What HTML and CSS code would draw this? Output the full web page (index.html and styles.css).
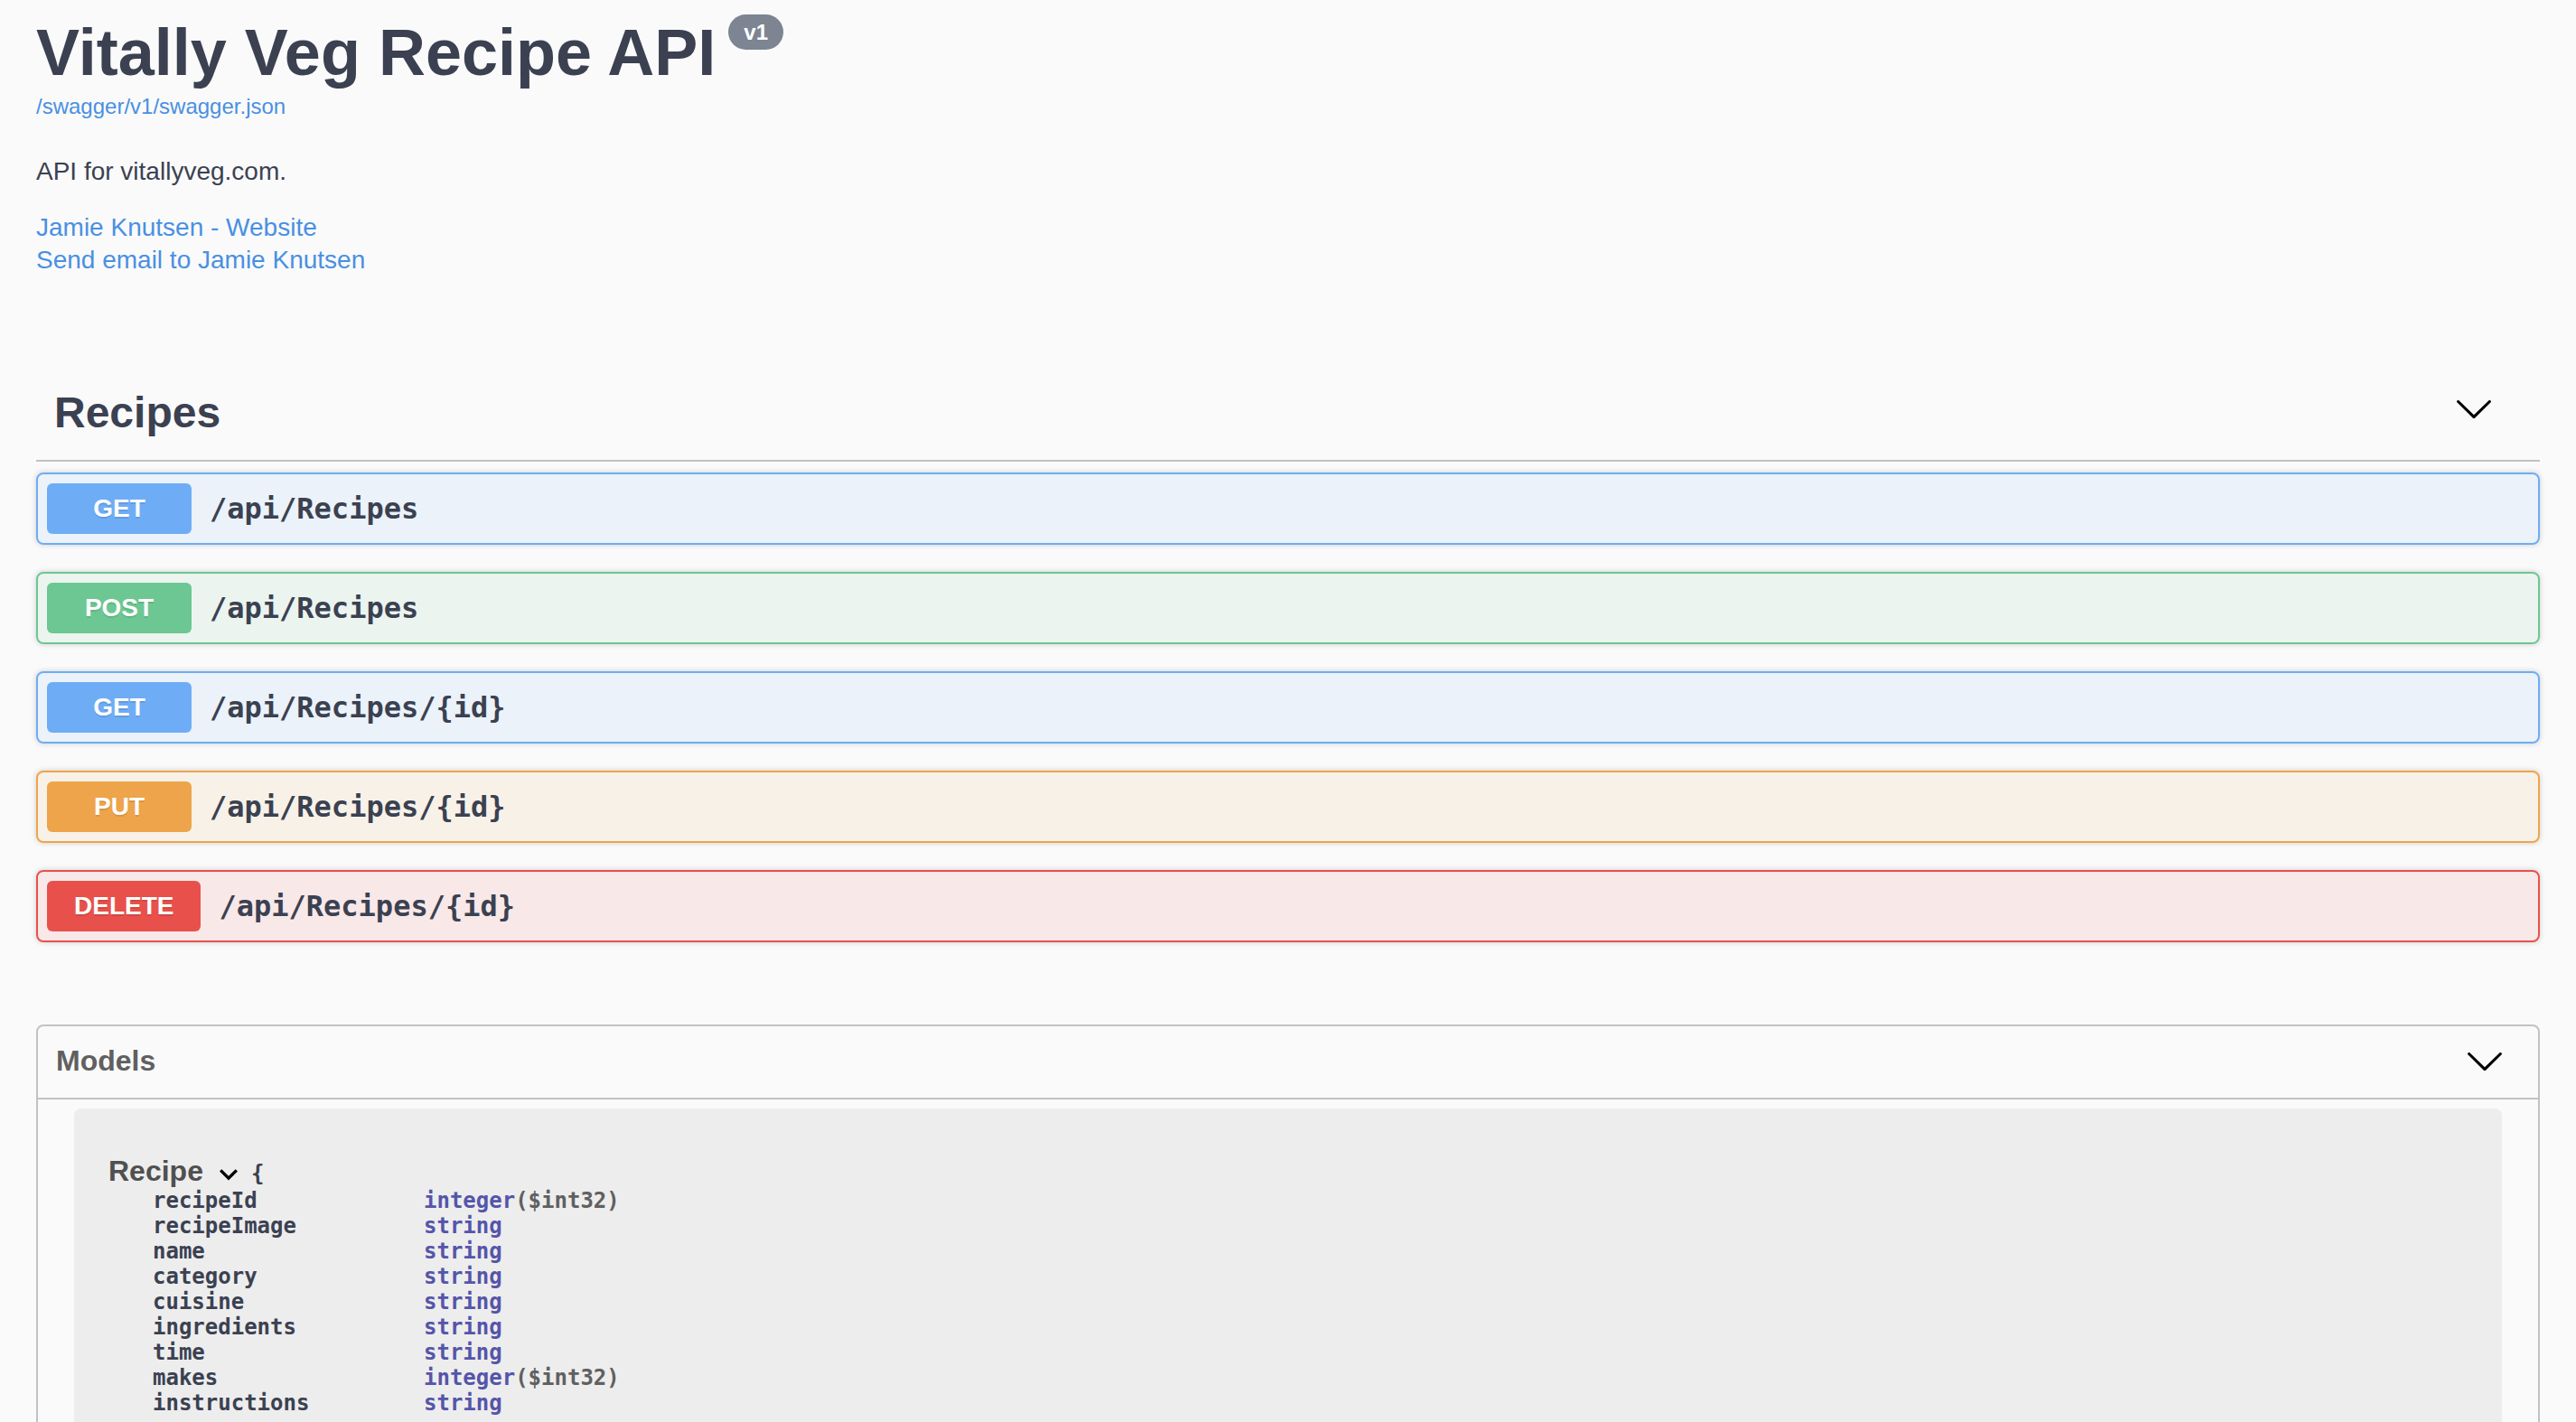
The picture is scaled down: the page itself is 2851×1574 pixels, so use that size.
FILE: index.html
```html
<!DOCTYPE html>
<html lang="en">
<head>
<meta charset="utf-8">
<title>Swagger UI</title>
<link rel="stylesheet" href="styles.css">
</head>
<body>
<div class="wrapper">
  <section class="info">
    <h2 class="title">Vitally Veg Recipe API<span class="version">v1</span></h2>
    <div class="base-url"><a href="#">/swagger/v1/swagger.json</a></div>
    <p class="description">API for vitallyveg.com.</p>
    <div class="contact">
      <a href="#">Jamie Knutsen - Website</a>
      <a href="#">Send email to Jamie Knutsen</a>
    </div>
  </section>

  <section class="tag-section">
    <h3 class="opblock-tag">
      <span class="tag-name">Recipes</span>
      <button class="expand tag-expand" type="button" aria-label="Collapse">
        <svg class="arrow" width="44" height="44" viewBox="0 0 20 20"><path d="M17.418 6.109c.272-.268.709-.268.979 0s.271.701 0 .969l-7.908 7.83c-.27.268-.707.268-.979 0l-7.908-7.83c-.27-.268-.27-.701 0-.969.271-.268.709-.268.979 0L10 13.25l7.418-7.141z"/></svg>
      </button>
    </h3>

    <div class="opblock get">
      <span class="method">GET</span>
      <span class="path">/api/Recipes</span>
    </div>
    <div class="opblock post">
      <span class="method">POST</span>
      <span class="path">/api/Recipes</span>
    </div>
    <div class="opblock get">
      <span class="method">GET</span>
      <span class="path">/api/Recipes/{id}</span>
    </div>
    <div class="opblock put">
      <span class="method">PUT</span>
      <span class="path">/api/Recipes/{id}</span>
    </div>
    <div class="opblock delete">
      <span class="method">DELETE</span>
      <span class="path">/api/Recipes/{id}</span>
    </div>
  </section>

  <section class="models">
    <h4 class="models-head">
      <span>Models</span>
      <svg class="arrow models-arrow" width="44" height="44" viewBox="0 0 20 20"><path d="M17.418 6.109c.272-.268.709-.268.979 0s.271.701 0 .969l-7.908 7.83c-.27.268-.707.268-.979 0l-7.908-7.83c-.27-.268-.27-.701 0-.969.271-.268.709-.268.979 0L10 13.25l7.418-7.141z"/></svg>
    </h4>
    <div class="model-container">
      <div class="model-title-line"><span class="model-title">Recipe</span><svg class="model-toggle" width="20" height="12.5" viewBox="6 8.5 12 7.5"><path d="M16.59 8.59L12 13.17 7.41 8.59 6 10l6 6 6-6z"/></svg><span class="brace">{</span></div>
      <div class="props">
        <span class="prop-name">recipeId</span><span class="prop-type">integer<span class="prop-format">($int32)</span></span>
        <span class="prop-name">recipeImage</span><span class="prop-type">string</span>
        <span class="prop-name">name</span><span class="prop-type">string</span>
        <span class="prop-name">category</span><span class="prop-type">string</span>
        <span class="prop-name">cuisine</span><span class="prop-type">string</span>
        <span class="prop-name">ingredients</span><span class="prop-type">string</span>
        <span class="prop-name">time</span><span class="prop-type">string</span>
        <span class="prop-name">makes</span><span class="prop-type">integer<span class="prop-format">($int32)</span></span>
        <span class="prop-name">instructions</span><span class="prop-type">string</span>
      </div>
    </div>
  </section>
</div>
</body>
</html>
```

FILE: styles.css
```css
html {
  overflow: hidden;
}

body {
  margin: 0;
  background: #fafafa;
  font-family: "Liberation Sans", Arial, sans-serif;
  color: #3b4151;
}

.wrapper {
  padding: 0 40px 80px;
}

a {
  color: #4990e2;
  text-decoration: none;
}

/* ---------- info ---------- */
.title {
  margin: 18px 0 0;
  font-size: 72px;
  line-height: 80px;
  font-weight: bold;
  color: #3b4151;
  white-space: nowrap;
}

.version {
  display: inline-block;
  vertical-align: top;
  margin: -2px 0 0 14px;
  padding: 6px 17px;
  border-radius: 40px;
  background: #7d8492;
  color: #fff;
  font-size: 24px;
  line-height: 27px;
  font-weight: bold;
}

.base-url {
  margin-top: 6px;
  font-size: 24px;
  line-height: 28px;
}

.description {
  margin: 38px 0 0;
  font-size: 28px;
  line-height: 40px;
  color: #3b4151;
}

.contact {
  margin-top: 24px;
  display: flex;
  flex-direction: column;
  align-items: flex-start;
  font-size: 28px;
  line-height: 36px;
}

/* ---------- operations ---------- */
.opblock-tag {
  display: flex;
  align-items: center;
  margin: 103px 0 12px;
  padding: 20px 40px 24px 20px;
  border-bottom: 2px solid rgba(59, 65, 81, 0.3);
  font-size: 48px;
  line-height: 56px;
  font-weight: bold;
  color: #3b4151;
}

.tag-name {
  flex: 1;
}

.expand {
  border: none;
  background: none;
  padding: 0 11px 0 0;
  margin: 0 0 10px;
  display: flex;
}

.arrow {
  display: block;
  fill: #000;
}

.opblock {
  display: flex;
  align-items: center;
  margin-bottom: 30px;
  padding: 10px;
  border: 2px solid;
  border-radius: 8px;
  box-shadow: 0 0 6px rgba(0, 0, 0, 0.19);
}

.method {
  box-sizing: border-box;
  min-width: 160px;
  padding: 12px 30px;
  border-radius: 6px;
  color: #fff;
  font-size: 28px;
  line-height: 32px;
  font-weight: bold;
  text-align: center;
  text-shadow: 0 2px 0 rgba(0, 0, 0, 0.1);
}

.path {
  padding: 0 20px;
  font-family: "DejaVu Sans Mono", Menlo, monospace;
  font-weight: bold;
  font-size: 32px;
  line-height: 40px;
  color: #3b4151;
}

.get {
  border-color: #6eadf6;
  background: rgba(110, 173, 246, 0.1);
}
.get .method {
  background: #6eadf6;
}

.post {
  border-color: #6cc793;
  background: rgba(108, 199, 147, 0.1);
}
.post .method {
  background: #6cc793;
}

.put {
  border-color: #eea44a;
  background: rgba(238, 164, 74, 0.1);
}
.put .method {
  background: #eea44a;
}

.delete {
  border-color: #e8514b;
  background: rgba(232, 81, 75, 0.1);
}
.delete .method {
  background: #e8514b;
}

/* ---------- models ---------- */
.models {
  margin-top: 91px;
  border: 2px solid rgba(59, 65, 81, 0.3);
  border-radius: 8px;
}

.models-head {
  display: flex;
  align-items: center;
  justify-content: space-between;
  margin: 0;
  padding: 18px 37px 21px 20px;
  border-bottom: 2px solid rgba(59, 65, 81, 0.3);
  font-size: 32px;
  line-height: 40px;
  font-weight: bold;
  color: #606060;
}

.models-arrow {
  margin: -2px 0;
}

.model-container {
  margin: 10px 40px 0;
  padding: 50px 38px 60px;
  border-radius: 8px;
  background: #ededed;
}

.model-title-line {
  font-size: 32px;
  line-height: 38px;
  white-space: nowrap;
}

.model-title {
  font-weight: bold;
  color: #505050;
}

.model-toggle {
  display: inline-block;
  vertical-align: top;
  margin: 17px 15px 0 18px;
  fill: #000;
}

.brace {
  font-family: "DejaVu Sans Mono", Menlo, monospace;
  font-weight: bold;
  font-size: 24px;
  line-height: 1;
  color: #3b4151;
}

.props {
  display: grid;
  grid-template-columns: 300px auto;
  padding-left: 49px;
  font-family: "DejaVu Sans Mono", Menlo, monospace;
  font-weight: bold;
  font-size: 24px;
  line-height: 28px;
}

.prop-name {
  color: #3b4151;
}

.prop-type {
  color: #55a;
}

.prop-format {
  color: #606060;
}
```
